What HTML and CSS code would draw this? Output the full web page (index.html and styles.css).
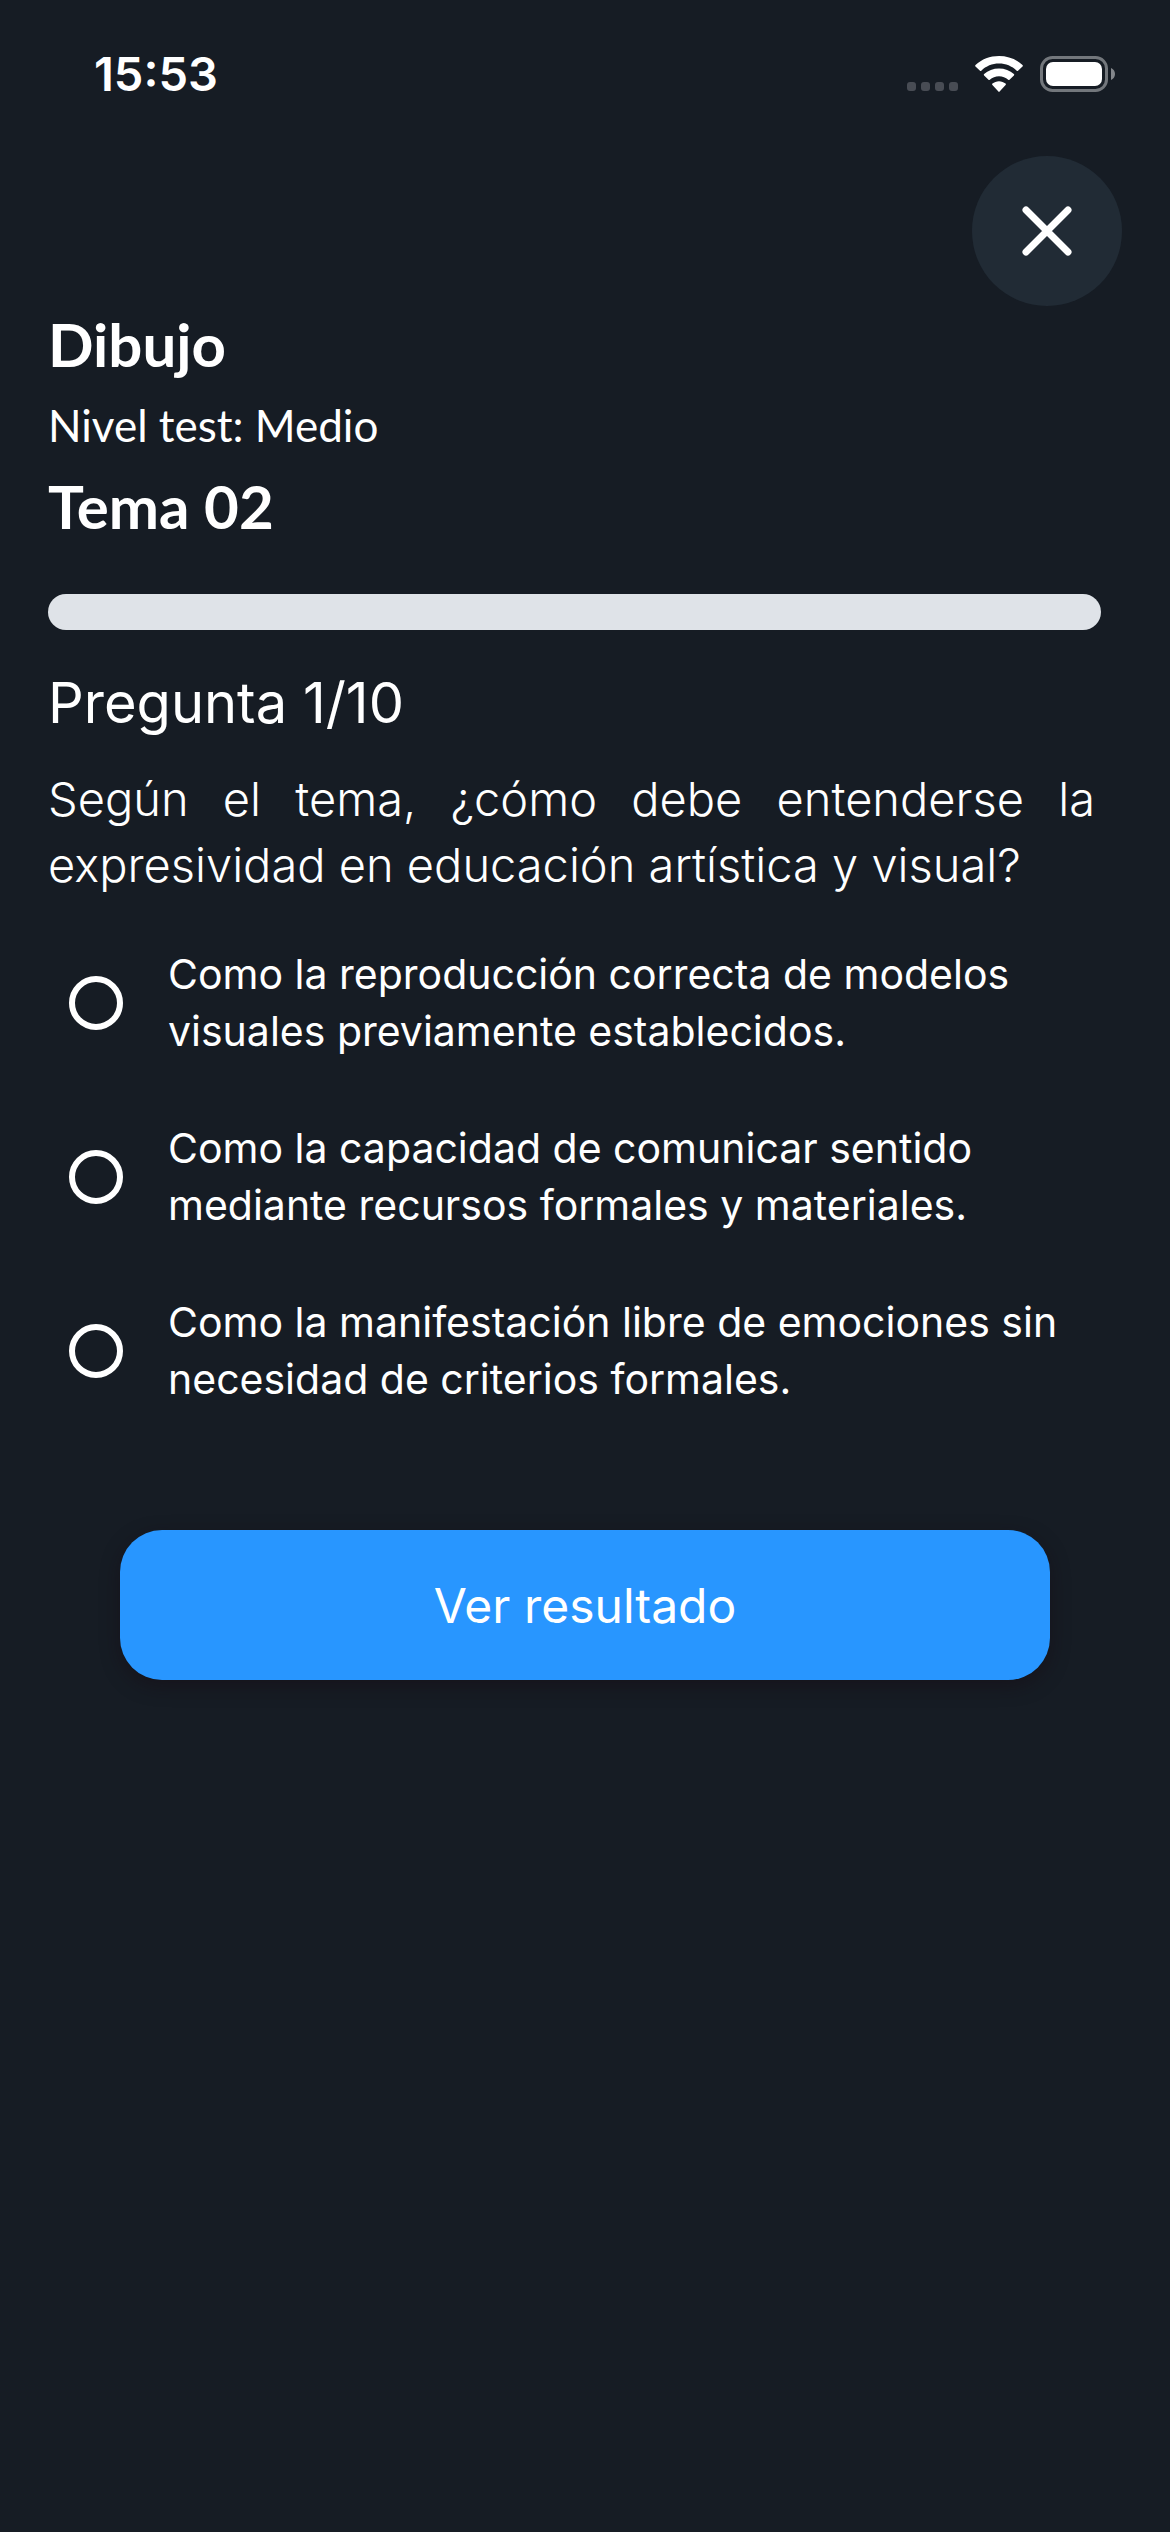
FILE: index.html
```html
<!DOCTYPE html>
<html lang="es">
<head>
    <meta charset="UTF-8">
    <meta name="viewport" content="width=device-width, initial-scale=1.0">
    <title>Test - Dibujo</title>
    <link rel="stylesheet" href="styles.css">
</head>
<body>
    <header class="status-bar">
        <span class="status-time">15:53</span>
        <div class="status-icons">
            <svg class="icon-signal" width="51" height="36" viewBox="0 0 51 36" aria-hidden="true">
                <rect x="0" y="26" width="9" height="9" rx="3"/>
                <rect x="14" y="26" width="9" height="9" rx="3"/>
                <rect x="28" y="26" width="9" height="9" rx="3"/>
                <rect x="42" y="26" width="9" height="9" rx="3"/>
            </svg>
            <svg class="icon-wifi" width="48" height="36" viewBox="0 0 48 36" aria-hidden="true">
                <path d="M24 7.6c6.800 0 13 2.600 17.700 7.100.400.400.900.400 1.300 0l4.500-4.200c.5-.5.5-1 0-1.500C41.300 3.200 33 0 24 0S6.700 3.200.5 9c-.5.5-.5 1 0 1.500L5 14.700c.4.4.9.4 1.300 0C11 10.200 17.200 7.600 24 7.600z"/>
                <path d="M24 20.300c3.500 0 6.700 1.300 9.200 3.500.4.400.9.400 1.300 0l4.400-4.200c.5-.5.5-1 0-1.500C35 14.600 29.700 12.600 24 12.600s-11 2-14.900 5.500c-.5.5-.5 1 0 1.500l4.400 4.200c.4.4.9.4 1.300 0 2.500-2.200 5.700-3.500 9.200-3.500z"/>
                <path d="M30.600 29c.5-.5.5-1 0-1.400-1.900-1.500-4.100-2.400-6.600-2.400s-4.700.9-6.600 2.400c-.5.4-.5.900 0 1.400l6 6.600c.4.4.8.400 1.200 0z"/>
            </svg>
            <svg class="icon-battery" width="75" height="36" viewBox="0 0 75 36" aria-hidden="true">
                <rect class="battery-shell" x="1.500" y="1.500" width="65" height="33" rx="11"/>
                <rect x="6" y="6" width="56" height="24" rx="7"/>
                <path class="battery-tip" d="M71 12c2.400 1 4 3.300 4 6s-1.600 5-4 6z"/>
            </svg>
        </div>
    </header>

    <main class="test">
        <div class="close-row">
            <button class="close-btn" type="button" aria-label="Cerrar">
                <svg width="50" height="50" viewBox="0 0 50 50" aria-hidden="true">
                    <path d="M4 4L46 46M46 4L4 46"/>
                </svg>
            </button>
        </div>

        <h1 class="title">Dibujo</h1>
        <p class="level">Nivel test: Medio</p>
        <h2 class="title">Tema 02</h2>

        <progress class="progress" value="0" max="10" aria-label="Progreso"></progress>

        <form class="question">
            <h3 class="counter">Pregunta 1/10</h3>
            <p class="question-text" id="questionText">Según el tema, ¿cómo debe entenderse la expresividad en educación artística y visual?</p>

            <div class="options" role="radiogroup" aria-labelledby="questionText">
                <label class="option">
                    <input type="radio" name="answer" value="a">
                    <span>Como la reproducción correcta de modelos visuales previamente establecidos.</span>
                </label>
                <label class="option">
                    <input type="radio" name="answer" value="b">
                    <span>Como la capacidad de comunicar sentido mediante recursos formales y materiales.</span>
                </label>
                <label class="option">
                    <input type="radio" name="answer" value="c">
                    <span>Como la manifestación libre de emociones sin necesidad de criterios formales.</span>
                </label>
            </div>

            <button class="result-btn" type="button">Ver resultado</button>
        </form>
    </main>
</body>
</html>
```
FILE: styles.css
```css
* {
    box-sizing: border-box;
}

body {
    margin: 0;
    min-height: 100vh;
    background: #161c24;
    color: #ffffff;
    font-family: Inter, sans-serif;
}

/* Status bar */
.status-bar {
    display: flex;
    justify-content: space-between;
    align-items: center;
    padding: 47px 55px 55px 94px;
}

.status-time {
    font-size: 47px;
    font-weight: 600;
    line-height: 54px;
}

.status-icons {
    display: flex;
    align-items: center;
    gap: 17px;
    fill: #ffffff;
}

.icon-signal {
    fill: #484c54;
}

.battery-shell {
    fill: none;
    stroke: #73777c;
    stroke-width: 3;
}

.battery-tip {
    fill: #83868b;
}

/* Test header */
.test {
    padding: 0 48px;
}

.close-row {
    display: flex;
    justify-content: flex-end;
}

.close-btn {
    display: flex;
    align-items: center;
    justify-content: center;
    width: 150px;
    height: 150px;
    padding: 0;
    border: none;
    border-radius: 50%;
    background: #212b35;
    cursor: pointer;
}

.close-btn path {
    fill: none;
    stroke: #ffffff;
    stroke-width: 7;
    stroke-linecap: round;
}

.title {
    margin: 2px 0 0;
    font-family: Lato, sans-serif;
    font-size: 60px;
    font-weight: 700;
    line-height: 72px;
}

.level {
    margin: 15px 0;
    font-family: Lato, sans-serif;
    font-size: 44px;
    line-height: 60px;
}

.progress {
    display: block;
    appearance: none;
    width: calc(100% - 21px);
    height: 36px;
    margin: 52px 0 40px;
    border: none;
    border-radius: 18px;
    background: #dfe3e8;
    overflow: hidden;
}

.progress::-webkit-progress-bar {
    background: #dfe3e8;
}

.progress::-webkit-progress-value {
    background: #2896ff;
}

/* Question */
.counter {
    margin: 0 0 30px;
    font-size: 56px;
    font-weight: 400;
    line-height: 66px;
}

.question-text {
    margin: 0 27px 18px 0;
    font-size: 47px;
    font-weight: 300;
    line-height: 66px;
    text-align: justify;
}

.option {
    display: flex;
    align-items: center;
    gap: 45px;
    padding: 30px 21px;
    font-size: 41px;
    line-height: 57px;
    cursor: pointer;
}

.option input {
    appearance: none;
    flex: none;
    width: 54px;
    height: 54px;
    margin: 0;
    border: 6px solid #ffffff;
    border-radius: 50%;
}

.option input:checked {
    background: radial-gradient(#ffffff 50%, transparent 55%);
}

.result-btn {
    display: block;
    width: calc(100% - 144px);
    height: 150px;
    margin: 92px auto 0;
    border: none;
    border-radius: 42px;
    background: #2896ff;
    box-shadow: 0 6px 18px rgba(22, 12, 20, 0.5);
    color: #ffffff;
    font-family: inherit;
    font-size: 48px;
    cursor: pointer;
}
```
